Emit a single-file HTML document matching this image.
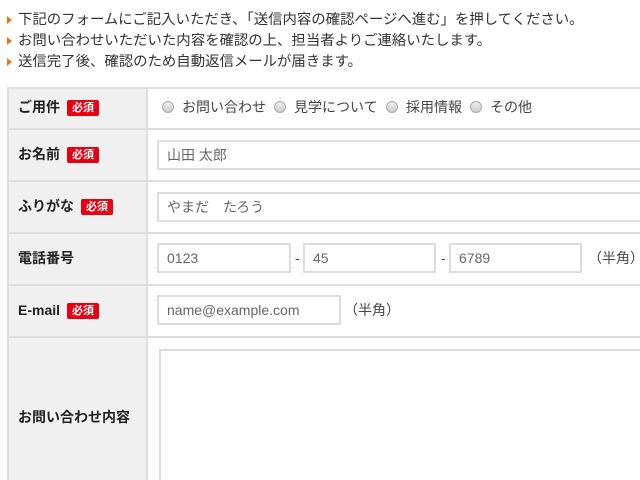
<!DOCTYPE html>
<html style="height:480px;overflow:hidden"><head><meta charset="utf-8"><style>
*{margin:0;padding:0;box-sizing:border-box}
body{width:640px;height:480px;overflow:hidden;background:#fff;font-family:"Liberation Sans","Noto Sans CJK JP",sans-serif;color:#333;position:relative}
.a{position:absolute}
.l{position:absolute;left:18px;font-size:14.4px;line-height:16px;white-space:nowrap}
.tri{position:absolute;left:7px;width:0;height:0;border-left:5px solid #e8741c;border-top:4px solid transparent;border-bottom:4px solid transparent}
.th{position:absolute;left:7px;width:140px;background:#f0f0f0;border:2px solid #ddd;border-right:none}
.td{position:absolute;left:146px;width:500px;border:2px solid #ddd}
.lab{position:absolute;left:18px;font-size:14px;font-weight:bold;color:#222;line-height:16px}
.req{display:inline-block;background:#e60012;color:#fff;font-size:11px;font-weight:bold;padding:1px 5px;border-radius:2px;margin-left:7px;vertical-align:1px;line-height:14px}
.in{position:absolute;border:2px solid #ddd;background:#fff;font-size:14px;color:#666;padding-left:8px;line-height:26px}
.r{display:inline-block;width:12px;height:12px;border-radius:50%;border:1px solid #aaa;background:linear-gradient(#eee,#ccc);vertical-align:-1px;margin-right:8px}
.t{font-size:14px;color:#444;line-height:16px}
</style></head><body>
<div class="tri" style="top:16px"></div><div class="l" style="top:12px">下記のフォームにご記入いただき、「送信内容の確認ページへ進む」を押してください。</div>
<div class="tri" style="top:37px"></div><div class="l" style="top:33px">お問い合わせいただいた内容を確認の上、担当者よりご連絡いたします。</div>
<div class="tri" style="top:58px"></div><div class="l" style="top:54px">送信完了後、確認のため自動返信メールが届きます。</div>

<div class="th" style="top:87px;height:43px"></div><div class="td" style="top:87px;height:43px"></div>
<div class="th" style="top:128px;height:54px"></div><div class="td" style="top:128px;height:54px"></div>
<div class="th" style="top:180px;height:54px"></div><div class="td" style="top:180px;height:54px"></div>
<div class="th" style="top:232px;height:54px"></div><div class="td" style="top:232px;height:54px"></div>
<div class="th" style="top:284px;height:54px"></div><div class="td" style="top:284px;height:54px"></div>
<div class="th" style="top:336px;height:150px;border-bottom:none"></div><div class="td" style="top:336px;height:150px;border-bottom:none"></div>

<div class="lab" style="top:99px">ご用件<span class="req">必須</span></div>
<div class="lab" style="top:146px">お名前<span class="req">必須</span></div>
<div class="lab" style="top:198px">ふりがな<span class="req">必須</span></div>
<div class="lab" style="top:250px">電話番号</div>
<div class="lab" style="top:302px">E-mail<span class="req">必須</span></div>
<div class="lab" style="top:409px">お問い合わせ内容</div>

<div class="a t" style="left:162px;top:99px"><span class="r"></span>お問い合わせ</div>
<div class="a t" style="left:274px;top:99px"><span class="r"></span>見学について</div>
<div class="a t" style="left:386px;top:99px"><span class="r"></span>採用情報</div>
<div class="a t" style="left:470px;top:99px"><span class="r"></span>その他</div>

<div class="in" style="left:157px;top:140px;width:500px;height:30px">山田 太郎</div>
<div class="in" style="left:157px;top:192px;width:500px;height:30px">やまだ　たろう</div>
<div class="in" style="left:157px;top:243px;width:134px;height:30px">0123</div>
<div class="a t" style="left:295px;top:250px">-</div>
<div class="in" style="left:303px;top:243px;width:133px;height:30px">45</div>
<div class="a t" style="left:441px;top:250px">-</div>
<div class="in" style="left:449px;top:243px;width:133px;height:30px">6789</div>
<div class="a t" style="left:588px;top:250px">（半角）</div>
<div class="in" style="left:157px;top:295px;width:184px;height:30px">name@example.com</div>
<div class="a t" style="left:344px;top:302px">（半角）</div>
<div class="in" style="left:159px;top:349px;width:500px;height:137px;border-bottom:none"></div>
</body></html>
